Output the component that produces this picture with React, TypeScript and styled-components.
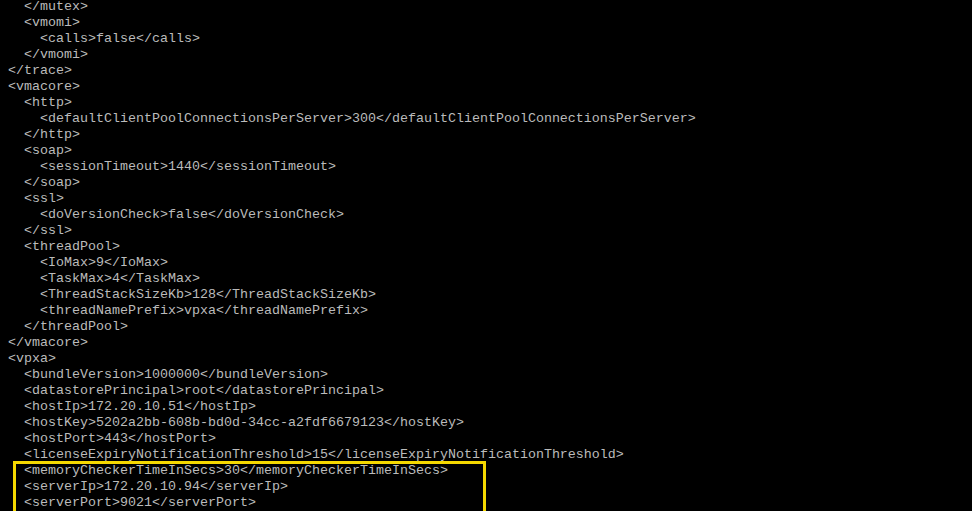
import React from "react";
import styled, { createGlobalStyle } from "styled-components";

const Global = createGlobalStyle`
  html, body { margin: 0; padding: 0; background: #000; }
  body { width: 972px; height: 511px; overflow: hidden; }
`;

const Terminal = styled.div`
  width: 972px;
  height: 511px;
  background: #000;
  overflow: hidden;
  padding-left: 8px;
  box-sizing: border-box;
`;

const Screen = styled.pre`
  margin: -1px 0 0 0;
  font-family: "Liberation Mono", "Courier New", monospace;
  font-size: 13.333px;
  line-height: 16px;
  color: #bbbbbb;
  white-space: pre;
`;

const Line = styled.div`
  height: 16px;
`;

const Highlight = styled.div`
  position: relative;
  &::after {
    content: "";
    position: absolute;
    left: 5px;
    top: -2px;
    width: 473px;
    height: 64px;
    box-sizing: border-box;
    border: 3px solid #f5d800;
  }
`;

const before = [
  "  </mutex>",
  "  <vmomi>",
  "    <calls>false</calls>",
  "  </vmomi>",
  "</trace>",
  "<vmacore>",
  "  <http>",
  "    <defaultClientPoolConnectionsPerServer>300</defaultClientPoolConnectionsPerServer>",
  "  </http>",
  "  <soap>",
  "    <sessionTimeout>1440</sessionTimeout>",
  "  </soap>",
  "  <ssl>",
  "    <doVersionCheck>false</doVersionCheck>",
  "  </ssl>",
  "  <threadPool>",
  "    <IoMax>9</IoMax>",
  "    <TaskMax>4</TaskMax>",
  "    <ThreadStackSizeKb>128</ThreadStackSizeKb>",
  "    <threadNamePrefix>vpxa</threadNamePrefix>",
  "  </threadPool>",
  "</vmacore>",
  "<vpxa>",
  "  <bundleVersion>1000000</bundleVersion>",
  "  <datastorePrincipal>root</datastorePrincipal>",
  "  <hostIp>172.20.10.51</hostIp>",
  "  <hostKey>5202a2bb-608b-bd0d-34cc-a2fdf6679123</hostKey>",
  "  <hostPort>443</hostPort>",
  "  <licenseExpiryNotificationThreshold>15</licenseExpiryNotificationThreshold>",
];

const highlighted = [
  "  <memoryCheckerTimeInSecs>30</memoryCheckerTimeInSecs>",
  "  <serverIp>172.20.10.94</serverIp>",
  "  <serverPort>9021</serverPort>",
];

export default function App() {
  return (
    <>
      <Global />
      <Terminal>
        <Screen>
          {before.map((l, i) => (
            <Line key={i}>{l}</Line>
          ))}
          <Highlight>
            {highlighted.map((l, i) => (
              <Line key={i}>{l}</Line>
            ))}
          </Highlight>
        </Screen>
      </Terminal>
    </>
  );
}
